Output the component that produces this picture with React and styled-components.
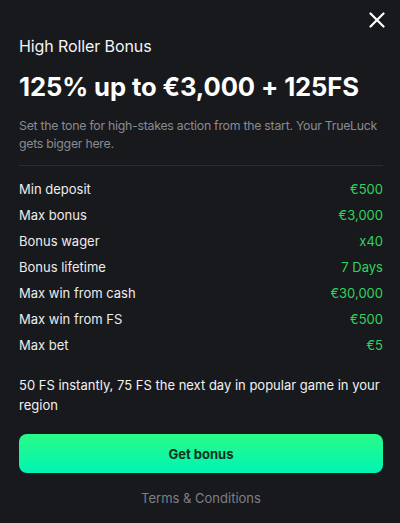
import React from "react"
import styled, { createGlobalStyle } from "styled-components"

const Global = createGlobalStyle`
  html, body {
    margin: 0;
    padding: 0;
    background: #18191d;
  }
  body {
    font-family: Inter, "Noto Sans", sans-serif;
    -webkit-font-smoothing: antialiased;
  }
`

const Modal = styled.div`
  width: 400px;
  height: 523px;
  box-sizing: border-box;
  background: #18191d;
  padding: 12px 17px 0 19px;
  color: #ffffff;
  position: relative;
`

const CloseButton = styled.button`
  position: absolute;
  top: 11px;
  right: 14px;
  width: 18px;
  height: 18px;
  padding: 0;
  border: 0;
  background: none;
  cursor: pointer;
  display: flex;
  align-items: center;
  justify-content: center;
`

const Subtitle = styled.h2`
  margin: 24px 0 0;
  font-size: 16px;
  font-weight: 400;
  line-height: 20px;
  letter-spacing: -0.1px;
  color: #f4f4f5;
`

const Headline = styled.h1`
  margin: 16px 0 0;
  font-size: 25.6px;
  font-weight: 700;
  line-height: 30px;
  letter-spacing: -0.1px;
  color: #ffffff;
`

const Description = styled.p`
  margin: 15px 0 0;
  font-size: 12.3px;
  line-height: 18px;
  letter-spacing: -0.25px;
  color: #8a8b90;
`

const Divider = styled.hr`
  margin: 12px 0 0;
  border: 0;
  height: 1px;
  background: #2c2d32;
`

const Details = styled.dl`
  margin: 10px 0 0;
  display: flex;
  flex-direction: column;
`

const Row = styled.div`
  display: flex;
  justify-content: space-between;
  align-items: center;
  height: 26px;
  font-size: 13px;
`

const Label = styled.dt`
  color: #ececee;
`

const Value = styled.dd`
  margin: 0;
  color: #2fd35f;
`

const Note = styled.p`
  margin: 17px 0 0;
  font-size: 13px;
  line-height: 20px;
  color: #f1f1f3;
`

const CtaButton = styled.button`
  margin-top: 19px;
  width: 100%;
  height: 39px;
  border: 0;
  border-radius: 8px;
  background: linear-gradient(180deg, #2afa88 0%, #00f4b4 100%);
  color: #0c3320;
  font-family: inherit;
  font-size: 13px;
  font-weight: 700;
  cursor: pointer;
`

const TermsLink = styled.a`
  display: block;
  margin-top: 17px;
  text-align: center;
  font-size: 13px;
  color: #7e7f84;
  text-decoration: none;
`

const details = [
  ["Min deposit", "€500"],
  ["Max bonus", "€3,000"],
  ["Bonus wager", "x40"],
  ["Bonus lifetime", "7 Days"],
  ["Max win from cash", "€30,000"],
  ["Max win from FS", "€500"],
  ["Max bet", "€5"],
]

export default function App() {
  return (
    <>
      <Global />
      <Modal>
        <CloseButton aria-label="Close">
          <svg width="16" height="16" viewBox="0 0 16 16">
            <path d="M1.5 1.5 L14.5 14.5 M14.5 1.5 L1.5 14.5" stroke="#fff" strokeWidth="2.2" strokeLinecap="round" />
          </svg>
        </CloseButton>
        <Subtitle>High Roller Bonus</Subtitle>
        <Headline>125% up to €3,000 + 125FS</Headline>
        <Description>
          Set the tone for high-stakes action from the start. Your TrueLuck gets bigger here.
        </Description>
        <Divider />
        <Details>
          {details.map(([label, value]) => (
            <Row key={label}>
              <Label>{label}</Label>
              <Value>{value}</Value>
            </Row>
          ))}
        </Details>
        <Note>50 FS instantly, 75 FS the next day in popular game in your region</Note>
        <CtaButton>Get bonus</CtaButton>
        <TermsLink href="#">Terms &amp; Conditions</TermsLink>
      </Modal>
    </>
  )
}
